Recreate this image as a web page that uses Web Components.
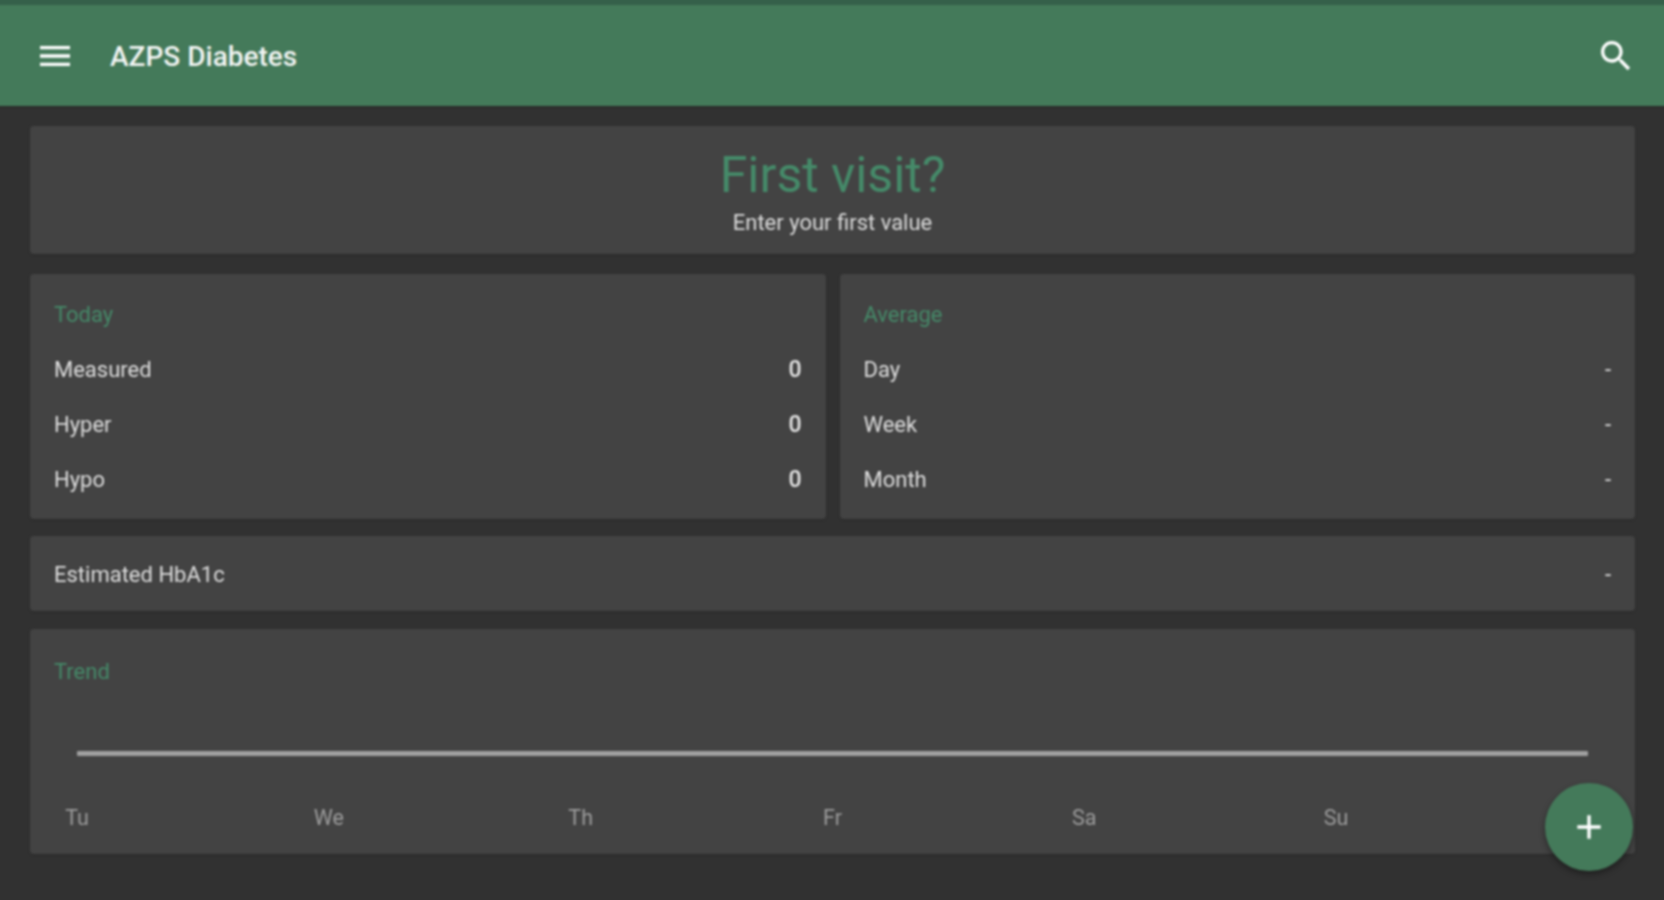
<!DOCTYPE html>
<html>
<head>
<meta charset="utf-8">
<title>AZPS Diabetes</title>
<style>
    html, body { margin: 0; height: 100%; }
    body { background: #313131; font-family: Roboto, "Liberation Sans", sans-serif; overflow: hidden; }
</style>
</head>
<body>
<azps-app>
    <azps-toolbar slot="toolbar">AZPS Diabetes</azps-toolbar>

    <azps-card class="visit">
        <azps-welcome heading="First visit?">Enter your first value</azps-welcome>
    </azps-card>

    <azps-columns>
        <azps-card>
            <azps-label>Today</azps-label>
            <azps-row name="Measured" value="0" strong></azps-row>
            <azps-row name="Hyper" value="0" strong></azps-row>
            <azps-row name="Hypo" value="0" strong></azps-row>
        </azps-card>
        <azps-card>
            <azps-label>Average</azps-label>
            <azps-row name="Day" value="-"></azps-row>
            <azps-row name="Week" value="-"></azps-row>
            <azps-row name="Month" value="-"></azps-row>
        </azps-card>
    </azps-columns>

    <azps-card>
        <azps-row name="Estimated HbA1c" value="-" single></azps-row>
    </azps-card>

    <azps-card>
        <azps-label class="trend">Trend</azps-label>
        <azps-trend days="Tu,We,Th,Fr,Sa,Su,"></azps-trend>
    </azps-card>

    <azps-fab slot="fab"></azps-fab>
</azps-app>

<script>
    class AzpsApp extends HTMLElement {
        connectedCallback() {
            let shadow = this.attachShadow({ mode: 'open' });
            // the host sticks out 6px past the window so the blur doesn't fade at the edges
            shadow.innerHTML = `<style>
    :host { display: block; position: relative; margin: -6px; height: 912px; overflow: hidden; filter: blur(1px); }
    .content { display: flex; flex-direction: column; gap: 18px; padding: 20px 35px 0 36px; }
    ::slotted(azps-fab) { position: absolute; left: 1551px; top: 789px; }
</style>
<slot name="toolbar"></slot>
<div class="content"><slot></slot></div>
<slot name="fab"></slot>`;
        }
    }

    class AzpsToolbar extends HTMLElement {
        connectedCallback() {
            let shadow = this.attachShadow({ mode: 'open' });
            shadow.innerHTML = `<style>
    :host { display: block; background: #35604a; padding-top: 11px; }
    .bar { display: flex; align-items: center; height: 101px; background: #447a5a; color: #fff; padding: 0 34px 0 41px; box-shadow: 0 1px 2px rgba(0,0,0,.25); }
    .title { font-size: 28px; font-weight: 500; margin-left: 35px; margin-top: 1px; flex: 1; color: #f2f5f3; }
    svg { display: block; fill: #fff; }
</style>
<div class="bar">
    <svg width="40" height="40" viewBox="0 0 24 24"><path d="M3 18h18v-2H3v2zm0-5h18v-2H3v2zm0-7v2h18V6H3z"/></svg>
    <div class="title"><slot></slot></div>
    <svg width="40" height="40" viewBox="0 0 24 24"><path d="M15.5 14h-.79l-.28-.27C15.41 12.59 16 11.11 16 9.5 16 5.91 13.09 3 9.5 3S3 5.91 3 9.5 5.91 16 9.5 16c1.61 0 3.09-.59 4.23-1.57l.27.28v.79l5 4.99L20.49 19l-4.99-5zm-6 0C7.01 14 5 11.99 5 9.5S7.01 5 9.5 5 14 7.01 14 9.5 11.99 14 9.5 14z"/></svg>
</div>`;
        }
    }

    class AzpsCard extends HTMLElement {
        connectedCallback() {
            let shadow = this.attachShadow({ mode: 'open' });
            shadow.innerHTML = `<style>
    :host { display: block; background: #434343; border-radius: 4px; padding: 0 24px; box-shadow: 0 1px 2px rgba(0,0,0,.18); min-width: 0; }
</style>
<slot></slot>`;
        }
    }

    class AzpsWelcome extends HTMLElement {
        connectedCallback() {
            let shadow = this.attachShadow({ mode: 'open' });
            shadow.innerHTML = `<style>
    :host { display: block; height: 128px; text-align: center; box-sizing: border-box; padding-top: 21px; }
    .heading { font-size: 50px; line-height: 56px; color: #458a69; }
    .sub { font-size: 22px; line-height: 28px; margin-top: 6px; color: #dcdcdc; }
</style>
<div class="heading"></div>
<div class="sub"><slot></slot></div>`;
            shadow.querySelector('.heading').textContent = this.getAttribute('heading');
        }
    }

    class AzpsColumns extends HTMLElement {
        connectedCallback() {
            let shadow = this.attachShadow({ mode: 'open' });
            shadow.innerHTML = `<style>
    :host { display: grid; grid-template-columns: 1fr 1fr; gap: 14px; margin: 2px 0 -1px; }
    ::slotted(azps-card) { padding-bottom: 12px; }
</style>
<slot></slot>`;
        }
    }

    class AzpsLabel extends HTMLElement {
        connectedCallback() {
            let shadow = this.attachShadow({ mode: 'open' });
            shadow.innerHTML = `<style>
    :host { display: block; font-size: 22px; line-height: 28px; padding-top: 27px; padding-bottom: 13px; color: #458a69; }
    :host(.trend) { padding-top: 29px; padding-bottom: 11px; }
</style>
<slot></slot>`;
        }
    }

    class AzpsRow extends HTMLElement {
        connectedCallback() {
            let shadow = this.attachShadow({ mode: 'open' });
            shadow.innerHTML = `<style>
    :host { display: flex; justify-content: space-between; align-items: center; height: 55px; font-size: 22px; color: #dedede; }
    :host([single]) { height: 73px; padding-top: 2px; }
    .value { color: #e6e6e6; }
    :host([strong]) .value { font-weight: 500; font-size: 23px; }
</style>
<span></span><span class="value"></span>`;
            let spans = shadow.querySelectorAll('span');
            spans[0].textContent = this.getAttribute('name');
            spans[1].textContent = this.getAttribute('value');
        }
    }

    class AzpsTrend extends HTMLElement {
        connectedCallback() {
            let shadow = this.attachShadow({ mode: 'open' });
            shadow.innerHTML = `<style>
    :host { display: block; padding: 54px 23px 22px 23px; }
    .line { height: 5px; background: #a0a0a0; border-radius: 1px; }
    .days { display: flex; justify-content: space-between; margin-top: 48px; font-size: 21.5px; line-height: 28px; color: #9c9c9c; }
    .day { width: 0; display: flex; justify-content: center; white-space: nowrap; }
</style>
<div class="line"></div>
<div class="days"></div>`;
            let days = shadow.querySelector('.days');
            this.getAttribute('days').split(',').forEach(d => {
                let div = document.createElement('div');
                div.classList.add('day');
                div.textContent = d;
                days.appendChild(div);
            });
        }
    }

    class AzpsFab extends HTMLElement {
        connectedCallback() {
            let shadow = this.attachShadow({ mode: 'open' });
            shadow.innerHTML = `<style>
    :host { display: flex; align-items: center; justify-content: center; width: 88px; height: 88px; border-radius: 50%; background: #447a5a; box-shadow: 0 3px 6px rgba(0,0,0,.4); }
    svg { display: block; fill: #fff; }
</style>
<svg width="40" height="40" viewBox="0 0 24 24"><path d="M19 13h-6v6h-2v-6H5v-2h6V5h2v6h6v2z"/></svg>`;
        }
    }

    customElements.define('azps-app', AzpsApp);
    customElements.define('azps-toolbar', AzpsToolbar);
    customElements.define('azps-card', AzpsCard);
    customElements.define('azps-welcome', AzpsWelcome);
    customElements.define('azps-columns', AzpsColumns);
    customElements.define('azps-label', AzpsLabel);
    customElements.define('azps-row', AzpsRow);
    customElements.define('azps-trend', AzpsTrend);
    customElements.define('azps-fab', AzpsFab);
</script>
</body>
</html>
